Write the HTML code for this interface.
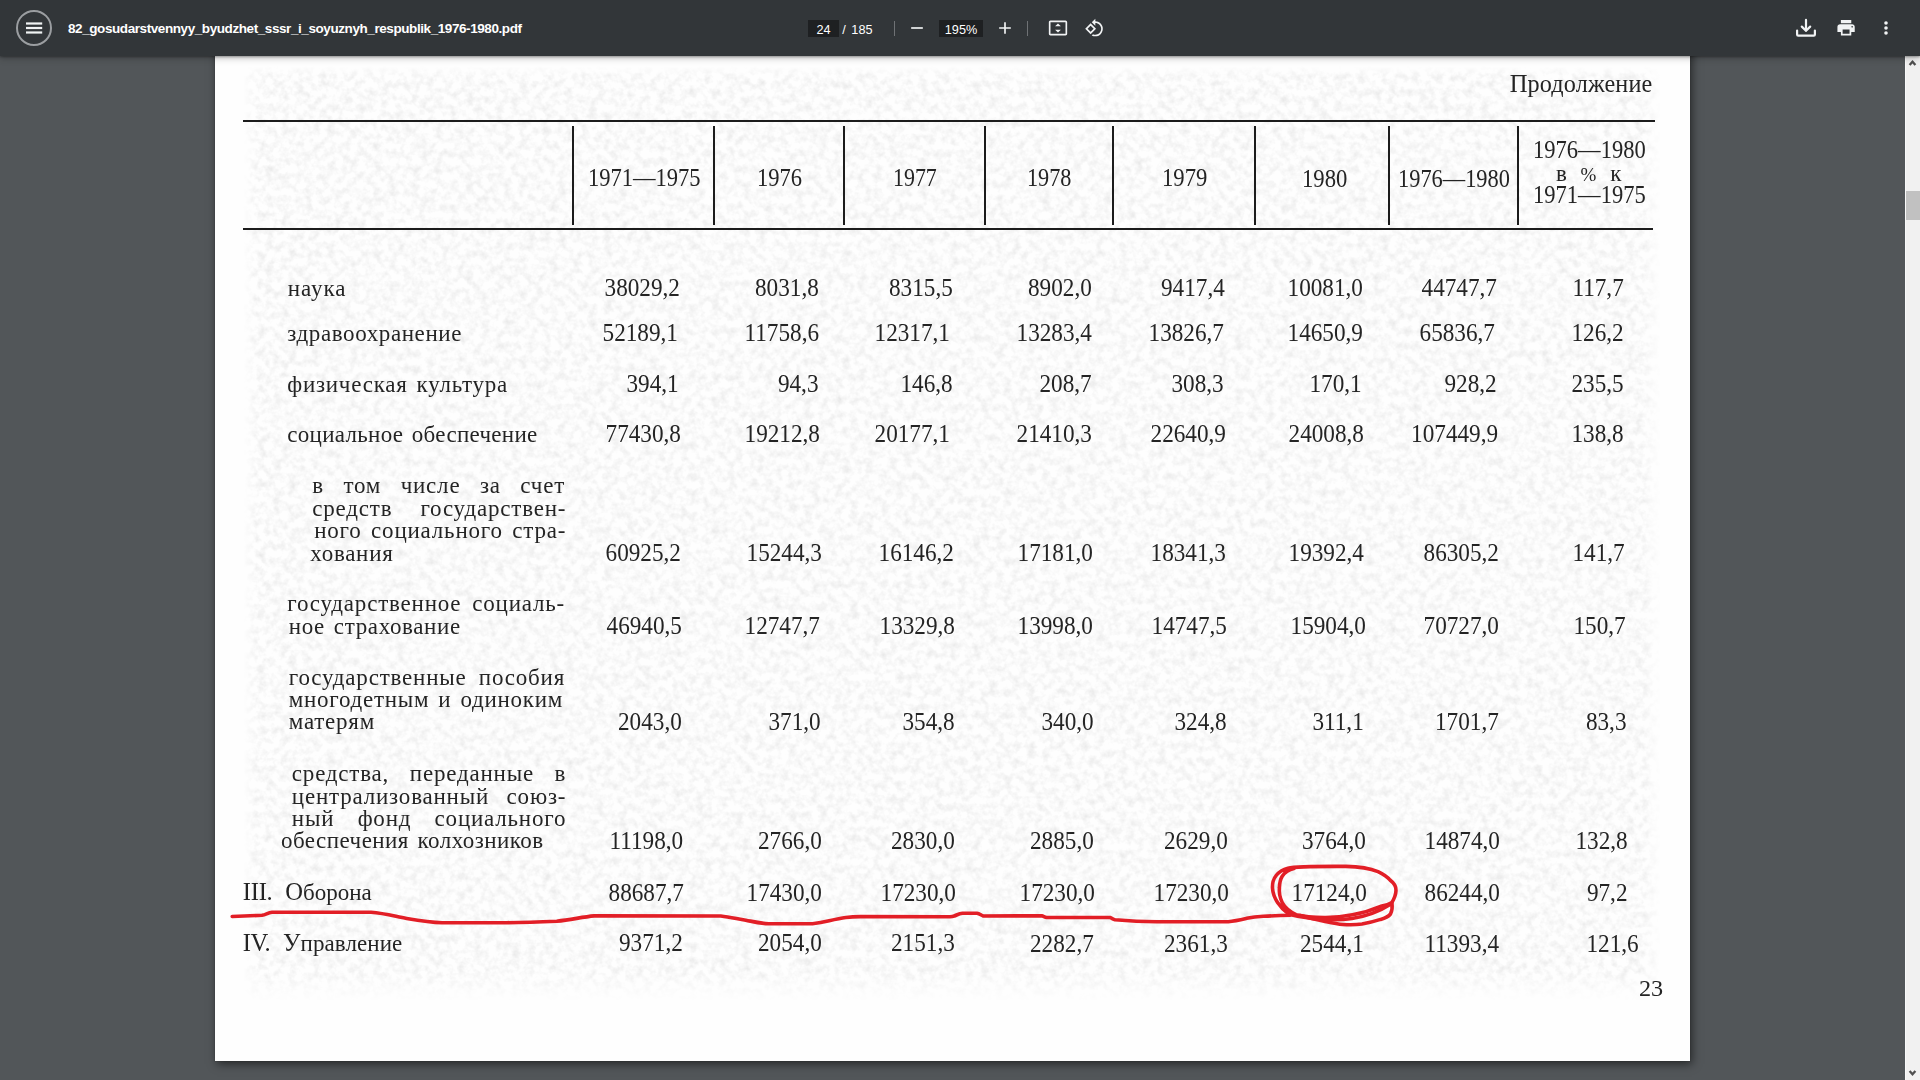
<!DOCTYPE html>
<html lang="ru">
<head>
<meta charset="utf-8">
<title>82_gosudarstvennyy_byudzhet_sssr_i_soyuznyh_respublik_1976-1980.pdf</title>
<style>
html,body{margin:0;padding:0;width:1920px;height:1080px;overflow:hidden;background:#525659;font-family:"Liberation Sans",sans-serif;}
#app{position:relative;width:1920px;height:1080px;overflow:hidden;background:#525659;}
#toolbar{position:absolute;left:0;top:0;width:1920px;height:56px;background:#323639;box-shadow:0 -2px 8px rgba(0,0,0,.09),0 4px 8px rgba(0,0,0,.06),0 1px 2px rgba(0,0,0,.3),0 2px 6px rgba(0,0,0,.15);z-index:5;color:#fff;}
#page{position:absolute;left:215px;top:40px;width:1475px;height:1021px;background:#fefefe;box-shadow:0 0 0 1px rgba(0,0,0,.05),2px 3px 9px rgba(0,0,0,.55);}
#doc{position:absolute;left:0;top:0;width:1920px;height:1080px;font-family:"Liberation Serif",serif;color:#242424;filter:blur(0.35px);}
.t{position:absolute;line-height:0;white-space:pre;}
.t::before{content:"";display:inline-block;width:0;height:40px;}
.ln{position:absolute;background:#1c1c1c;}
.b{font-size:24.6px;}
#sb{position:absolute;left:1905px;top:56px;width:15px;height:1024px;background:#f1f1f1;z-index:4;}
#sb .th{position:absolute;left:0;top:135px;width:15px;height:29px;background:#c1c1c1;}
#title{position:absolute;left:68px;top:0;height:56px;line-height:58px;font-size:13.5px;font-weight:700;letter-spacing:-0.42px;white-space:pre;}
#ico{position:absolute;left:0;top:0;}
#tex{position:absolute;left:243px;top:66px;-webkit-mask-image:linear-gradient(to right,transparent 0,#000 14px,#000 1400px,transparent 1418px),linear-gradient(to bottom,transparent 0,#000 10px,#000 905px,transparent 935px);-webkit-mask-composite:source-in;mask-image:linear-gradient(to right,transparent 0,#000 14px,#000 1400px,transparent 1418px),linear-gradient(to bottom,transparent 0,#000 10px,#000 905px,transparent 935px);mask-composite:intersect;}
#ann{position:absolute;left:0;top:0;z-index:3;}
.inp{position:absolute;top:20px;height:17px;line-height:20.5px;background:#1e2022;color:#fff;font-size:12.7px;text-align:center;}
.tx{position:absolute;top:20px;height:17px;line-height:20.5px;word-spacing:2px;color:#fff;font-size:12.7px;white-space:pre;}
</style>
</head>
<body>
<div id="app">
<div id="page"></div>
<svg id="tex" width="1418" height="935" viewBox="0 0 1418 935">
<filter id="pn" x="0" y="0" width="100%" height="100%"><feTurbulence type="fractalNoise" baseFrequency="0.13" numOctaves="3" seed="7"/><feColorMatrix type="matrix" values="0 0 0 0 0  0 0 0 0 0  0 0 0 0 0  0.150 0 0 0 -0.060"/></filter>
<rect width="1418" height="935" filter="url(#pn)"/>
</svg>

<div id="doc">
<div class="ln" style="left:243px;top:120px;width:1412px;height:2px"></div>
<div class="ln" style="left:243px;top:228px;width:1410px;height:2px"></div>
<div class="ln" style="left:572px;top:125.5px;width:2px;height:99.5px"></div>
<div class="ln" style="left:713px;top:125.5px;width:2px;height:99.5px"></div>
<div class="ln" style="left:843px;top:125.5px;width:2px;height:99.5px"></div>
<div class="ln" style="left:984px;top:125.5px;width:2px;height:99.5px"></div>
<div class="ln" style="left:1112px;top:125.5px;width:2px;height:99.5px"></div>
<div class="ln" style="left:1254px;top:125.5px;width:2px;height:99.5px"></div>
<div class="ln" style="left:1388px;top:125.5px;width:2px;height:99.5px"></div>
<div class="ln" style="left:1517px;top:125.5px;width:2px;height:99.5px"></div>
<div class="t" style="left:287.75px;top:255.70px;font-size:23px;letter-spacing:0.952px;">наука</div>
<div class="t" style="left:287.25px;top:300.60px;font-size:23px;letter-spacing:0.602px;">здравоохранение</div>
<div class="t" style="left:287.25px;top:351.70px;font-size:23px;letter-spacing:0.754px;word-spacing:2.500px;">физическая культура</div>
<div class="t" style="left:287.25px;top:402.40px;font-size:23px;letter-spacing:0.301px;word-spacing:2.500px;">социальное обеспечение</div>
<div class="t" style="left:312.25px;top:453.40px;font-size:23px;letter-spacing:0.800px;word-spacing:12.931px;">в том числе за счет</div>
<div class="t" style="left:312.25px;top:475.70px;font-size:23px;letter-spacing:0.800px;word-spacing:21.544px;">средств государствен-</div>
<div class="t" style="left:314.15px;top:498.10px;font-size:23px;letter-spacing:0.800px;word-spacing:3.023px;">ного социального стра-</div>
<div class="t" style="left:310.35px;top:520.80px;font-size:23px;letter-spacing:0.718px;">хования</div>
<div class="t" style="left:287.25px;top:571.30px;font-size:23px;letter-spacing:0.800px;word-spacing:4.381px;">государственное социаль-</div>
<div class="t" style="left:288.75px;top:594.40px;font-size:23px;letter-spacing:0.635px;word-spacing:2.500px;">ное страхование</div>
<div class="t" style="left:288.75px;top:644.90px;font-size:23px;letter-spacing:0.800px;word-spacing:5.697px;">государственные пособия</div>
<div class="t" style="left:288.75px;top:667.30px;font-size:23px;letter-spacing:0.750px;word-spacing:2.500px;">многодетным и одиноким</div>
<div class="t" style="left:288.75px;top:689.20px;font-size:23px;letter-spacing:0.766px;">матерям</div>
<div class="t" style="left:291.85px;top:741.30px;font-size:23px;letter-spacing:0.800px;word-spacing:14.119px;">средства, переданные в</div>
<div class="t" style="left:291.85px;top:763.60px;font-size:23px;letter-spacing:0.800px;word-spacing:10.956px;">централизованный союз-</div>
<div class="t" style="left:291.85px;top:785.60px;font-size:23px;letter-spacing:0.800px;word-spacing:16.770px;">ный фонд социального</div>
<div class="t" style="left:281.05px;top:807.60px;font-size:23px;letter-spacing:0.457px;word-spacing:2.500px;">обеспечения колхозников</div>
<div class="t" style="left:242.85px;top:859.50px;font-size:24.6px;letter-spacing:-0.273px;">III.</div>
<div class="t" style="left:285.15px;top:859.50px;font-size:23px;letter-spacing:0.017px;"><span class="b">О</span>борона</div>
<div class="t" style="left:242.85px;top:910.70px;font-size:24.6px;letter-spacing:-0.569px;">IV.</div>
<div class="t" style="left:283.05px;top:910.70px;font-size:23px;letter-spacing:0.087px;"><span class="b">У</span>правление</div>
<div class="t" style="right:1240.21px;top:255.70px;font-size:24.3px;transform:scaleX(0.955);transform-origin:100% 0;">38029,2</div>
<div class="t" style="right:1101.01px;top:255.70px;font-size:24.3px;transform:scaleX(0.955);transform-origin:100% 0;">8031,8</div>
<div class="t" style="right:967.31px;top:255.70px;font-size:24.3px;transform:scaleX(0.955);transform-origin:100% 0;">8315,5</div>
<div class="t" style="right:828.51px;top:255.70px;font-size:24.3px;transform:scaleX(0.955);transform-origin:100% 0;">8902,0</div>
<div class="t" style="right:695.61px;top:255.70px;font-size:24.3px;transform:scaleX(0.955);transform-origin:100% 0;">9417,4</div>
<div class="t" style="right:556.81px;top:255.70px;font-size:24.3px;transform:scaleX(0.955);transform-origin:100% 0;">10081,0</div>
<div class="t" style="right:422.71px;top:255.70px;font-size:24.3px;transform:scaleX(0.955);transform-origin:100% 0;">44747,7</div>
<div class="t" style="right:296.71px;top:255.70px;font-size:24.3px;transform:scaleX(0.955);transform-origin:100% 0;">117,7</div>
<div class="t" style="right:1241.71px;top:300.60px;font-size:24.3px;transform:scaleX(0.955);transform-origin:100% 0;">52189,1</div>
<div class="t" style="right:1101.01px;top:300.60px;font-size:24.3px;transform:scaleX(0.955);transform-origin:100% 0;">11758,6</div>
<div class="t" style="right:970.01px;top:300.60px;font-size:24.3px;transform:scaleX(0.955);transform-origin:100% 0;">12317,1</div>
<div class="t" style="right:828.51px;top:300.60px;font-size:24.3px;transform:scaleX(0.955);transform-origin:100% 0;">13283,4</div>
<div class="t" style="right:695.61px;top:300.60px;font-size:24.3px;transform:scaleX(0.955);transform-origin:100% 0;">13826,7</div>
<div class="t" style="right:556.81px;top:300.60px;font-size:24.3px;transform:scaleX(0.955);transform-origin:100% 0;">14650,9</div>
<div class="t" style="right:424.61px;top:300.60px;font-size:24.3px;transform:scaleX(0.955);transform-origin:100% 0;">65836,7</div>
<div class="t" style="right:296.71px;top:300.60px;font-size:24.3px;transform:scaleX(0.955);transform-origin:100% 0;">126,2</div>
<div class="t" style="right:1241.71px;top:351.70px;font-size:24.3px;transform:scaleX(0.955);transform-origin:100% 0;">394,1</div>
<div class="t" style="right:1101.01px;top:351.70px;font-size:24.3px;transform:scaleX(0.955);transform-origin:100% 0;">94,3</div>
<div class="t" style="right:967.31px;top:351.70px;font-size:24.3px;transform:scaleX(0.955);transform-origin:100% 0;">146,8</div>
<div class="t" style="right:828.51px;top:351.70px;font-size:24.3px;transform:scaleX(0.955);transform-origin:100% 0;">208,7</div>
<div class="t" style="right:696.31px;top:351.70px;font-size:24.3px;transform:scaleX(0.955);transform-origin:100% 0;">308,3</div>
<div class="t" style="right:558.41px;top:351.70px;font-size:24.3px;transform:scaleX(0.955);transform-origin:100% 0;">170,1</div>
<div class="t" style="right:423.51px;top:351.70px;font-size:24.3px;transform:scaleX(0.955);transform-origin:100% 0;">928,2</div>
<div class="t" style="right:296.31px;top:351.70px;font-size:24.3px;transform:scaleX(0.955);transform-origin:100% 0;">235,5</div>
<div class="t" style="right:1238.61px;top:402.40px;font-size:24.3px;transform:scaleX(0.955);transform-origin:100% 0;">77430,8</div>
<div class="t" style="right:1099.91px;top:402.40px;font-size:24.3px;transform:scaleX(0.955);transform-origin:100% 0;">19212,8</div>
<div class="t" style="right:970.01px;top:402.40px;font-size:24.3px;transform:scaleX(0.955);transform-origin:100% 0;">20177,1</div>
<div class="t" style="right:828.51px;top:402.40px;font-size:24.3px;transform:scaleX(0.955);transform-origin:100% 0;">21410,3</div>
<div class="t" style="right:694.41px;top:402.40px;font-size:24.3px;transform:scaleX(0.955);transform-origin:100% 0;">22640,9</div>
<div class="t" style="right:556.41px;top:402.40px;font-size:24.3px;transform:scaleX(0.955);transform-origin:100% 0;">24008,8</div>
<div class="t" style="right:421.91px;top:402.40px;font-size:24.3px;transform:scaleX(0.955);transform-origin:100% 0;">107449,9</div>
<div class="t" style="right:296.31px;top:402.40px;font-size:24.3px;transform:scaleX(0.955);transform-origin:100% 0;">138,8</div>
<div class="t" style="right:1238.61px;top:520.80px;font-size:24.3px;transform:scaleX(0.955);transform-origin:100% 0;">60925,2</div>
<div class="t" style="right:1098.31px;top:520.80px;font-size:24.3px;transform:scaleX(0.955);transform-origin:100% 0;">15244,3</div>
<div class="t" style="right:966.11px;top:520.80px;font-size:24.3px;transform:scaleX(0.955);transform-origin:100% 0;">16146,2</div>
<div class="t" style="right:827.41px;top:520.80px;font-size:24.3px;transform:scaleX(0.955);transform-origin:100% 0;">17181,0</div>
<div class="t" style="right:693.61px;top:520.80px;font-size:24.3px;transform:scaleX(0.955);transform-origin:100% 0;">18341,3</div>
<div class="t" style="right:555.71px;top:520.80px;font-size:24.3px;transform:scaleX(0.955);transform-origin:100% 0;">19392,4</div>
<div class="t" style="right:421.51px;top:520.80px;font-size:24.3px;transform:scaleX(0.955);transform-origin:100% 0;">86305,2</div>
<div class="t" style="right:295.51px;top:520.80px;font-size:24.3px;transform:scaleX(0.955);transform-origin:100% 0;">141,7</div>
<div class="t" style="right:1237.81px;top:594.40px;font-size:24.3px;transform:scaleX(0.955);transform-origin:100% 0;">46940,5</div>
<div class="t" style="right:1099.91px;top:594.40px;font-size:24.3px;transform:scaleX(0.955);transform-origin:100% 0;">12747,7</div>
<div class="t" style="right:965.41px;top:594.40px;font-size:24.3px;transform:scaleX(0.955);transform-origin:100% 0;">13329,8</div>
<div class="t" style="right:826.61px;top:594.40px;font-size:24.3px;transform:scaleX(0.955);transform-origin:100% 0;">13998,0</div>
<div class="t" style="right:693.21px;top:594.40px;font-size:24.3px;transform:scaleX(0.955);transform-origin:100% 0;">14747,5</div>
<div class="t" style="right:554.51px;top:594.40px;font-size:24.3px;transform:scaleX(0.955);transform-origin:100% 0;">15904,0</div>
<div class="t" style="right:420.81px;top:594.40px;font-size:24.3px;transform:scaleX(0.955);transform-origin:100% 0;">70727,0</div>
<div class="t" style="right:294.31px;top:594.40px;font-size:24.3px;transform:scaleX(0.955);transform-origin:100% 0;">150,7</div>
<div class="t" style="right:1237.81px;top:690.40px;font-size:24.3px;transform:scaleX(0.955);transform-origin:100% 0;">2043,0</div>
<div class="t" style="right:1099.11px;top:690.40px;font-size:24.3px;transform:scaleX(0.955);transform-origin:100% 0;">371,0</div>
<div class="t" style="right:965.41px;top:690.40px;font-size:24.3px;transform:scaleX(0.955);transform-origin:100% 0;">354,8</div>
<div class="t" style="right:826.61px;top:690.40px;font-size:24.3px;transform:scaleX(0.955);transform-origin:100% 0;">340,0</div>
<div class="t" style="right:693.61px;top:690.40px;font-size:24.3px;transform:scaleX(0.955);transform-origin:100% 0;">324,8</div>
<div class="t" style="right:556.41px;top:690.40px;font-size:24.3px;transform:scaleX(0.955);transform-origin:100% 0;">311,1</div>
<div class="t" style="right:420.81px;top:690.40px;font-size:24.3px;transform:scaleX(0.955);transform-origin:100% 0;">1701,7</div>
<div class="t" style="right:293.61px;top:690.40px;font-size:24.3px;transform:scaleX(0.955);transform-origin:100% 0;">83,3</div>
<div class="t" style="right:1236.71px;top:808.70px;font-size:24.3px;transform:scaleX(0.955);transform-origin:100% 0;">11198,0</div>
<div class="t" style="right:1098.31px;top:808.70px;font-size:24.3px;transform:scaleX(0.955);transform-origin:100% 0;">2766,0</div>
<div class="t" style="right:965.41px;top:808.70px;font-size:24.3px;transform:scaleX(0.955);transform-origin:100% 0;">2830,0</div>
<div class="t" style="right:826.21px;top:808.70px;font-size:24.3px;transform:scaleX(0.955);transform-origin:100% 0;">2885,0</div>
<div class="t" style="right:692.51px;top:808.70px;font-size:24.3px;transform:scaleX(0.955);transform-origin:100% 0;">2629,0</div>
<div class="t" style="right:554.51px;top:808.70px;font-size:24.3px;transform:scaleX(0.955);transform-origin:100% 0;">3764,0</div>
<div class="t" style="right:419.61px;top:808.70px;font-size:24.3px;transform:scaleX(0.955);transform-origin:100% 0;">14874,0</div>
<div class="t" style="right:292.81px;top:808.70px;font-size:24.3px;transform:scaleX(0.955);transform-origin:100% 0;">132,8</div>
<div class="t" style="right:1235.91px;top:860.50px;font-size:24.3px;transform:scaleX(0.955);transform-origin:100% 0;">88687,7</div>
<div class="t" style="right:1097.91px;top:860.50px;font-size:24.3px;transform:scaleX(0.955);transform-origin:100% 0;">17430,0</div>
<div class="t" style="right:964.21px;top:860.50px;font-size:24.3px;transform:scaleX(0.955);transform-origin:100% 0;">17230,0</div>
<div class="t" style="right:825.51px;top:861.00px;font-size:24.3px;transform:scaleX(0.955);transform-origin:100% 0;">17230,0</div>
<div class="t" style="right:691.31px;top:861.00px;font-size:24.3px;transform:scaleX(0.955);transform-origin:100% 0;">17230,0</div>
<div class="t" style="right:553.01px;top:861.00px;font-size:24.3px;transform:scaleX(0.955);transform-origin:100% 0;">17124,0</div>
<div class="t" style="right:419.61px;top:861.00px;font-size:24.3px;transform:scaleX(0.955);transform-origin:100% 0;">86244,0</div>
<div class="t" style="right:292.81px;top:861.00px;font-size:24.3px;transform:scaleX(0.955);transform-origin:100% 0;">97,2</div>
<div class="t" style="right:1237.11px;top:911.20px;font-size:24.3px;transform:scaleX(0.955);transform-origin:100% 0;">9371,2</div>
<div class="t" style="right:1097.91px;top:911.20px;font-size:24.3px;transform:scaleX(0.955);transform-origin:100% 0;">2054,0</div>
<div class="t" style="right:965.41px;top:911.20px;font-size:24.3px;transform:scaleX(0.955);transform-origin:100% 0;">2151,3</div>
<div class="t" style="right:826.21px;top:911.60px;font-size:24.3px;transform:scaleX(0.955);transform-origin:100% 0;">2282,7</div>
<div class="t" style="right:691.71px;top:911.60px;font-size:24.3px;transform:scaleX(0.955);transform-origin:100% 0;">2361,3</div>
<div class="t" style="right:556.41px;top:911.60px;font-size:24.3px;transform:scaleX(0.955);transform-origin:100% 0;">2544,1</div>
<div class="t" style="right:420.81px;top:911.60px;font-size:24.3px;transform:scaleX(0.955);transform-origin:100% 0;">11393,4</div>
<div class="t" style="right:281.21px;top:911.60px;font-size:24.3px;transform:scaleX(0.955);transform-origin:100% 0;">121,6</div>
<div class="t" style="left:587.82px;top:145.80px;font-size:24.4px;transform:scaleX(0.9235);transform-origin:0 0;">1971—1975</div>
<div class="t" style="left:756.72px;top:145.80px;font-size:24.4px;transform:scaleX(0.9230);transform-origin:0 0;">1976</div>
<div class="t" style="left:892.66px;top:145.80px;font-size:24.4px;transform:scaleX(0.8971);transform-origin:0 0;">1977</div>
<div class="t" style="left:1026.74px;top:146.30px;font-size:24.4px;transform:scaleX(0.9122);transform-origin:0 0;">1978</div>
<div class="t" style="left:1161.61px;top:146.30px;font-size:24.4px;transform:scaleX(0.9294);transform-origin:0 0;">1979</div>
<div class="t" style="left:1302.31px;top:147.00px;font-size:24.4px;transform:scaleX(0.9294);transform-origin:0 0;">1980</div>
<div class="t" style="left:1397.93px;top:147.00px;font-size:24.4px;transform:scaleX(0.9177);transform-origin:0 0;">1976—1980</div>
<div class="t" style="left:1532.82px;top:118.10px;font-size:24.4px;transform:scaleX(0.9243);transform-origin:0 0;">1976—1980</div>
<div class="t" style="left:1555.90px;top:141.30px;font-size:23px;letter-spacing:4.052px;">в <span style="font-size:19px">%</span> к</div>
<div class="t" style="left:1532.82px;top:163.20px;font-size:24.4px;transform:scaleX(0.9243);transform-origin:0 0;">1971—1975</div>
<div class="t" style="left:1509.70px;top:51.50px;font-size:24.2px;letter-spacing:0.143px;"><span class="b">П</span>родолжение</div>
<div class="t" style="left:1638.69px;top:955.50px;font-size:24.0px;transform:scaleX(1.0092);transform-origin:0 0;">23</div>
</div>
<svg id="ann" width="1920" height="1080" viewBox="0 0 1920 1080">
<g fill="none" stroke="#e21e26" stroke-width="3.6" stroke-linecap="round" stroke-linejoin="round">
<path d="M232.2,916.5 L262,915.3 C266,914.6 268,912.6 272,912.3 L371,912.3 C385,913.4 395,916.4 406.7,918.5 C420,920.8 430,922.5 442,922.7 L506.7,922.7 C525,922.6 540,922 556.7,921.2 C572,919.6 582,917 594.2,915.9 L720.8,916 C730,917 737,918.8 745.8,920.2 C754,921.8 760,923.4 768.8,923.7 L812.5,923.7 C819,923 824,922 829.2,920.8 C835,919.4 840,918.2 845.8,917.5 C851,916.8 855,916.6 860.4,916.6 L950,916.7 C952,916.6 953,916.4 954.2,916 C957,915 959,913.5 962.5,913.3 L977,913.3 C979.5,913.6 981,915.2 983.3,916 L1041.7,915.800 C1043.500,916.200 1044.800,917.300 1046.700,917.500 L1110,917.500 C1112,918.200 1113,919.200 1115,919.700 C1128,920.800 1142,921.600 1156.700,921.700 L1228.300,921.700 C1235,921 1241,919.600 1246.700,918.300 C1252,917.200 1257,916.600 1263.300,916.300 C1272,915.800 1281,915.400 1290,915.200"/>
<path d="M1289,914.2 C1280,908 1273,898 1272.5,888 C1272,878 1278,871 1288,868.3 C1296,866.3 1310,866.2 1346,866.4 C1360,866.800 1370,868.500 1378,871.600 C1384,874.500 1388,877.500 1390,880 C1394,883 1396.300,886.500 1396,890.500 C1395.800,895 1394,899 1391.900,902.500 C1388,905 1384,906 1380.600,906.300 C1372,910 1362,913 1352.500,914.700 C1342,916.800 1333,917.600 1324.400,917.500 C1314,917.300 1304,916.500 1296,914.700 C1289,911 1284,906 1282.200,902.500 C1279.500,897 1279,892 1279.400,887.500 C1279.600,883 1280.500,879 1282.200,876.300 C1285,872 1289,869.500 1294,868.500"/>
<path d="M1391.9,903 C1392.5,907 1392,911 1390.5,914 C1388,917 1384,918.500 1380.600,919.400 C1374,921.500 1368,923 1362,924 C1355,925 1349,924.800 1343,924.500 C1336,924 1330,922.500 1324,921.200 C1315,919.500 1307,917.500 1300,915.600"/>
<path d="M1290,914.5 C1310,919.500 1335,921 1352,918.500 C1368,916 1380,911 1391,904"/>
</g>
</svg>
<div id="sb"><div class="th"></div>
<svg width="15" height="1024" viewBox="0 0 15 1024" style="position:absolute;left:0;top:0">
<rect x="0" y="0" width="1" height="1024" fill="#fafafa"/>
<g fill="none" stroke="#505050" stroke-width="2.300"><path d="M4.600 8.900L7.500 5.700L10.400 8.900"/><path d="M4.600 1015L7.500 1018.200L10.400 1015"/></g>
</svg></div>
<div id="toolbar">
<div id="title">82_gosudarstvennyy_byudzhet_sssr_i_soyuznyh_respublik_1976-1980.pdf</div>
<div class="inp" style="left:808px;width:31px;">24</div>
<div class="tx" style="left:842.3px;">/ 185</div>
<div class="inp" style="left:939px;width:44px;">195%</div>
<svg id="ico" width="1920" height="56" viewBox="0 0 1920 56">
<!-- menu button -->
<circle cx="34" cy="27.9" r="17" fill="none" stroke="#9b9ea1" stroke-width="2"/>
<g fill="#f1f3f4"><rect x="26" y="22.4" width="16.2" height="2.2"/><rect x="26" y="26.9" width="16.2" height="2.2"/><rect x="26" y="31.4" width="16.2" height="2.2"/></g>
<!-- separators -->
<rect x="894" y="21" width="1" height="15" fill="#6f7275"/>
<rect x="1027" y="21" width="1" height="15" fill="#6f7275"/>
<!-- minus / plus -->
<g fill="#f1f3f4" transform="translate(907,18) scale(0.8333)"><path d="M19 13H5v-2h14v2z"/></g>
<g fill="#f1f3f4" transform="translate(995,18) scale(0.8333)"><path d="M19 13h-6v6h-2v-6H5v-2h6V5h2v6h6v2z"/></g>
<!-- fit to page -->
<g fill="#f1f3f4" transform="translate(1048,18) scale(0.8333)"><path d="M21 3H3c-1.1 0-2 .9-2 2v14c0 1.1.9 2 2 2h18c1.1 0 2-.9 2-2V5c0-1.1-.9-2-2-2zm0 16H3V5h18v14zM12 6.5L8.5 10h7L12 6.5zM15.5 14h-7l3.500 3.500 3.500-3.500z"/></g>
<!-- rotate ccw -->
<g fill="#f1f3f4" transform="translate(1084.5,18) scale(0.8333)"><path d="M7.34 6.41L.86 12.9l6.49 6.48 6.49-6.480-6.500-6.490zM3.69 12.9l3.660-3.660L11 12.9l-3.660 3.660-3.650-3.660zm15.670-6.260C17.610 4.880 15.300 4 13 4V.76L8.760 5 13 9.240V6c1.790 0 3.580.68 4.950 2.050 2.730 2.730 2.730 7.170 0 9.900C16.580 19.320 14.790 20 13 20c-.97 0-1.940-.21-2.840-.61l-1.490 1.490C10.020 21.620 11.510 22 13 22c2.300 0 4.610-.88 6.360-2.640 3.520-3.510 3.520-9.210 0-12.720z"/></g>
<!-- download -->
<g fill="none" stroke="#f1f3f4" stroke-width="2.2" stroke-linecap="round" stroke-linejoin="round"><path d="M1797.1 30.6V34.6a1.100 1.100 0 0 0 1.100 1.100H1813.800a1.100 1.100 0 0 0 1.100-1.100V30.600"/><path d="M1806 19.9V30.400"/><path d="M1801.800 26.600L1806 30.800L1810.200 26.600"/></g>
<!-- print -->
<g fill="#f1f3f4" transform="translate(1835.7,17.3) scale(0.865)"><path d="M19 8H5c-1.660 0-3 1.340-3 3v6h4v4h12v-4h4v-6c0-1.660-1.340-3-3-3zm-3 11H8v-5h8v5zm3-7c-.55 0-1-.45-1-1s.45-1 1-1 1 .45 1 1-.45 1-1 1zm-1-9H6v4h12V3z"/></g>
<!-- more -->
<g fill="#f1f3f4"><circle cx="1886" cy="23" r="1.800"/><circle cx="1886" cy="28" r="1.800"/><circle cx="1886" cy="33" r="1.800"/></g>
</svg>
</div>
</div>
</body>
</html>
